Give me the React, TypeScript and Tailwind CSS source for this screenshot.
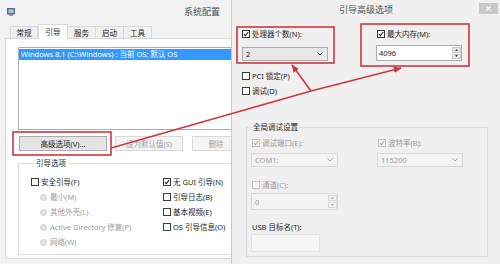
import React from 'react';

type BoxProps = { checked?: boolean; disabled?: boolean };

function CheckBox({ checked = false, disabled = false }: BoxProps) {
  return (
    <span
      className={`relative flex h-[8px] w-[8px] shrink-0 items-center justify-center border ${
        disabled ? 'border-[#c4c4c4] bg-[#f3f3f3]' : 'border-[#3c3c3c] bg-white'
      }`}
    >
      {checked && (
        <svg viewBox="0 0 8 8" className="h-[8px] w-[8px]">
          <path
            d="M1.2 4.3 L3.1 6.3 L7 1.3"
            fill="none"
            stroke={disabled ? '#a8a8a8' : '#1f1f1f'}
            strokeWidth="1.5"
          />
        </svg>
      )}
    </span>
  );
}

function CheckItem({ label, checked, disabled }: BoxProps & { label: string }) {
  return (
    <div className={`flex h-[10px] items-center gap-[2px] ${disabled ? 'text-[#9c9c9c]' : 'text-[#1e1e1e]'}`}>
      <CheckBox checked={checked} disabled={disabled} />
      <span>{label}</span>
    </div>
  );
}

function RadioItem({ label }: { label: string }) {
  return (
    <div className="flex h-[10px] items-center gap-[3px] pl-[9px] text-[#9c9c9c]">
      <span className="h-[7px] w-[7px] shrink-0 rounded-full border border-[#cdcdcd] bg-[#e4e4e4]" />
      <span>{label}</span>
    </div>
  );
}

function Chevron({ color }: { color: string }) {
  return (
    <svg viewBox="0 0 6 4" className="h-[4px] w-[6px]">
      <path d="M0.5 0.5 L3 3 L5.5 0.5" fill="none" stroke={color} strokeWidth="1" />
    </svg>
  );
}

function Spinner({ disabled = false }: { disabled?: boolean }) {
  const fill = disabled ? '#a0a0a0' : '#333';
  const box = disabled ? 'border-[#d8d8d8] bg-[#f0f0f0]' : 'border-[#c9c9c9] bg-[#e6e6e6]';
  return (
    <div className="flex h-full w-[9px] flex-col gap-[1px] py-[1px]">
      <div className={`flex flex-1 items-center justify-center border ${box}`}>
        <svg viewBox="0 0 4 3" className="h-[2px] w-[3px]">
          <path d="M0 3 L2 0 L4 3 z" fill={fill} />
        </svg>
      </div>
      <div className={`flex flex-1 items-center justify-center border ${box}`}>
        <svg viewBox="0 0 4 3" className="h-[2px] w-[3px]">
          <path d="M0 0 L4 0 L2 3 z" fill={fill} />
        </svg>
      </div>
    </div>
  );
}

function App() {
  return (
    <div className="relative flex h-[264px] w-[500px] overflow-hidden bg-[#f0f0f0] font-['Noto_Sans','Noto_Sans_CJK_SC',sans-serif] text-[7.5px] leading-[10px] text-[#1e1e1e]">
      {/* 系统配置 window (cropped) */}
      <div className="flex w-[231px] shrink-0 flex-col overflow-hidden bg-[#f2f2f2]">
        <div className="flex h-[24px] shrink-0 items-center pl-[7px] pr-[11px]">
          <svg viewBox="0 0 8 8" className="h-[8px] w-[8px]">
            <rect x="0.5" y="0.5" width="7" height="5.5" fill="#5d84b5" stroke="#4a5a70" strokeWidth="0.8" />
            <rect x="1.5" y="1.5" width="5" height="3.5" fill="#a9c7ea" />
            <rect x="2" y="6.5" width="4" height="1.2" fill="#6b6b6b" />
          </svg>
          <span className="ml-auto text-[9px] leading-[12px] text-[#505050]">系统配置</span>
        </div>

        {/* tabs */}
        <div className="flex h-[14px] shrink-0 items-end pl-[10px]">
          <div className="flex h-[12px] w-[28px] items-center justify-center border border-b-0 border-[#d9d9d9] bg-[#f0f0f0]">常规</div>
          <div className="relative z-10 -mb-px flex h-[15px] w-[30px] items-center justify-center border border-b-0 border-[#d9d9d9] bg-white">引导</div>
          <div className="flex h-[12px] w-[28px] items-center justify-center border border-b-0 border-l-0 border-[#d9d9d9] bg-[#f0f0f0]">服务</div>
          <div className="flex h-[12px] w-[28px] items-center justify-center border border-b-0 border-l-0 border-[#d9d9d9] bg-[#f0f0f0]">启动</div>
          <div className="flex h-[12px] w-[28px] items-center justify-center border border-b-0 border-l-0 border-[#d9d9d9] bg-[#f0f0f0]">工具</div>
        </div>

        {/* tab panel */}
        <div className="ml-[5px] flex h-[221px] w-[260px] shrink-0 flex-col border border-[#d9d9d9] bg-white pl-[12px] pt-[8px]">
          <div className="h-[83px] w-[240px] shrink-0 border border-[#abadb3] bg-white pt-[1px]">
            <div className="h-[11px] bg-[#3399ff] pl-[2px] leading-[11px] text-white">
              {'Windows 8.1 (C:\\Windows) : 当前 OS; 默认 OS'}
            </div>
          </div>

          <div className="mt-[6px] flex h-[15px] shrink-0 pl-[1px]">
            <div className="flex w-[88px] items-center justify-center border border-[#acacac] bg-[#e5e5e5]">高级选项(V)...</div>
            <div className="ml-[8px] flex w-[68px] items-center justify-center border border-[#d9d9d9] bg-[#f4f4f4] text-[#a2a2a2]">设为默认值(S)</div>
            <div className="ml-[9px] flex w-[48px] items-center justify-center border border-[#d9d9d9] bg-[#f4f4f4] text-[#a2a2a2]">删除</div>
          </div>

          <fieldset className="mt-[7px] h-[97px] w-[240px] shrink-0 border border-[#dcdcdc] pl-[12px]">
            <legend className="ml-[3px] px-[2px]">引导选项</legend>
            <div className="mt-[9px] flex">
              <div className="flex w-[132px] flex-col gap-[5px]">
                <CheckItem label="安全引导(F)" />
                <RadioItem label="最小(M)" />
                <RadioItem label="其他外壳(L)" />
                <RadioItem label="Active Directory 修复(P)" />
                <RadioItem label="网络(W)" />
              </div>
              <div className="flex flex-col gap-[5px]">
                <CheckItem label="无 GUI 引导(N)" checked />
                <CheckItem label="引导日志(B)" />
                <CheckItem label="基本视频(E)" />
                <CheckItem label="OS 引导信息(O)" />
              </div>
            </div>
          </fieldset>
        </div>
      </div>

      {/* 引导高级选项 window */}
      <div className="flex w-[269px] shrink-0 flex-col border-l border-[#c9c9c9] bg-[#f0f0f0]">
        <div className="flex h-[22px] shrink-0 items-start px-[2px]">
          <span className="w-[19px]" />
          <span className="flex-1 pt-[4px] text-center text-[9px] leading-[12px] text-[#505050]">引导高级选项</span>
          <div className="mt-[3px] flex h-[11px] w-[19px] items-center justify-center bg-[#c9c9c9]">
            <svg viewBox="0 0 6 6" className="h-[5px] w-[5px]">
              <path d="M0.5 0.5 L5.5 5.5 M5.5 0.5 L0.5 5.5" stroke="#ffffff" strokeWidth="1.3" />
            </svg>
          </div>
        </div>

        <div className="flex flex-col pl-[10px]">
          <div className="mt-[7px] flex">
            <div className="flex w-[86px] flex-col">
              <CheckItem label="处理器个数(N):" checked />
              <div className="mt-[8px] flex h-[14px] items-center justify-between border border-[#acacac] bg-[#e8e8e8] pl-[3px] pr-[4px]">
                <span>2</span>
                <Chevron color="#444" />
              </div>
            </div>
            <div className="ml-[48px] flex w-[86px] flex-col">
              <div className="pl-[1px]">
                <CheckItem label="最大内存(M):" checked />
              </div>
              <div className="mt-[6px] flex h-[16px] items-center border border-[#abadb3] bg-white pl-[2px]">
                <span className="flex-1">4096</span>
                <Spinner />
              </div>
            </div>
          </div>

          <div className="mt-[10px]">
            <CheckItem label="PCI 锁定(P)" />
          </div>
          <div className="mt-[5px]">
            <CheckItem label="调试(D)" />
          </div>

          <fieldset className="ml-[4px] mt-[26px] w-[242px] border border-[#dcdcdc] pb-[4px] pl-[4px]">
            <legend className="ml-[1px] px-[1px]">全局调试设置</legend>
            <div className="mt-[6px] flex">
              <div className="flex w-[87px] flex-col">
                <div className="pl-[1px]">
                  <CheckItem label="调试端口(E):" checked disabled />
                </div>
                <div className="mt-[5px] flex h-[14px] items-center justify-between border border-[#d9d9d9] bg-[#f3f3f3] pl-[3px] pr-[4px] text-[#9c9c9c]">
                  <span>COM1:</span>
                  <Chevron color="#a8a8a8" />
                </div>
              </div>
              <div className="ml-[39px] flex w-[86px] flex-col">
                <div className="pl-[1px]">
                  <CheckItem label="波特率(B):" checked disabled />
                </div>
                <div className="mt-[5px] flex h-[14px] items-center justify-between border border-[#d9d9d9] bg-[#f3f3f3] pl-[3px] pr-[4px] text-[#9c9c9c]">
                  <span>115200</span>
                  <Chevron color="#a8a8a8" />
                </div>
              </div>
            </div>

            <div className="mt-[13px] pl-[1px]">
              <CheckItem label="通道(C):" disabled />
            </div>
            <div className="mt-[3px] flex h-[17px] w-[87px] items-center border border-[#d9d9d9] bg-[#f3f3f3] pl-[3px] text-[#9c9c9c]">
              <span className="flex-1">0</span>
              <Spinner disabled />
            </div>

            <div className="mt-[12px] h-[10px] pl-[1px]">USB 目标名(T):</div>
            <div className="mt-[2px] h-[18px] w-[69px] border border-[#e2e2e2] bg-[#f5f5f5]" />
          </fieldset>
        </div>
      </div>

      {/* red annotations */}
      <svg className="pointer-events-none absolute inset-0" width="500" height="264" viewBox="0 0 500 264">
        <defs>
          <marker id="ah" viewBox="0 0 10 10" refX="9" refY="5" markerWidth="5" markerHeight="5" orient="auto">
            <path d="M0 1 L10 5 L0 9 z" fill="#d2363d" />
          </marker>
        </defs>
        <g fill="none" stroke="#d2363d" strokeWidth="1.6">
          <rect x="13" y="132" width="98" height="23" />
          <rect x="237" y="27" width="97" height="36" />
          <rect x="361" y="24" width="108" height="42" />
          <line x1="111" y1="148" x2="311" y2="91" />
          <line x1="311" y1="91" x2="292" y2="65" markerEnd="url(#ah)" />
          <line x1="311" y1="91" x2="401" y2="68" markerEnd="url(#ah)" />
        </g>
      </svg>
    </div>
  );
}

export default App;
